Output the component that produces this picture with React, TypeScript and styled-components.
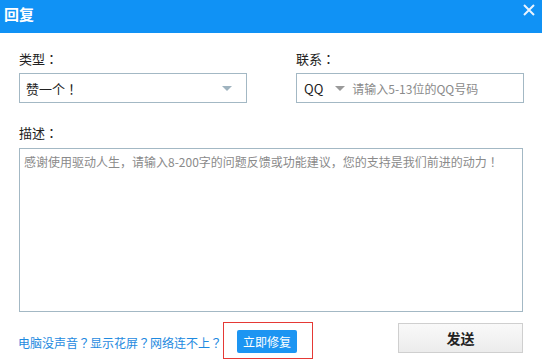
import React from "react";
import styled, { createGlobalStyle } from "styled-components";

const Global = createGlobalStyle`
  html, body { margin: 0; padding: 0; background: #fff; }
  body {
    font-family: "Noto Sans CJK SC", "Noto Sans", sans-serif;
  }
  * { box-sizing: border-box; }
`;

const Dialog = styled.div`
  width: 542px;
  height: 364px;
  background: #fff;
  display: flex;
  flex-direction: column;
  overflow: hidden;
`;

const TitleBar = styled.div`
  height: 33px;
  background: #1092f5;
  display: flex;
  align-items: flex-start;
  justify-content: space-between;
  padding: 0 7px 0 4px;
`;

const Title = styled.div`
  color: #fff;
  font-size: 15px;
  font-weight: bold;
  line-height: 28px;
`;

const Close = styled.div`
  width: 12px;
  height: 12px;
  margin-top: 4px;
  display: flex;
`;

const Body = styled.div`
  padding: 0 19px;
  display: flex;
  flex-direction: column;
`;

const FieldRow = styled.div`
  display: grid;
  grid-template-columns: 228px 228px;
  column-gap: 49px;
  margin-top: 17px;
`;

const Field = styled.div`
  display: flex;
  flex-direction: column;
`;

const Label = styled.div`
  font-size: 13px;
  line-height: 18px;
  color: #222;
  height: 23px;
  white-space: nowrap;
`;

const P = styled.span`
  font-family: "Noto Sans CJK TC", "Noto Sans CJK SC", sans-serif;
`;

const Box = styled.div`
  height: 30px;
  border: 1px solid #a3b8c4;
  display: flex;
  align-items: center;
  padding-left: 6px;
  padding-right: 7px;
  font-size: 13px;
  color: #222;
`;

const Value = styled.span<{ $grow?: boolean; $gap?: number }>`
  flex: ${(p) => (p.$grow ? 1 : "none")};
  margin-right: ${(p) => p.$gap ?? 0}px;
  white-space: nowrap;
`;

const Arrow = styled.span<{ $color: string }>`
  width: 0;
  height: 0;
  border-left: 5px solid transparent;
  border-right: 5px solid transparent;
  border-top: 5px solid ${(p) => p.$color};
  margin: 0 7px 0 0;
`;

const Placeholder = styled.span`
  font-size: 12px;
  color: #8a8a8a;
  white-space: nowrap;
`;

const DescLabel = styled(Label)`
  margin-top: 21px;
  height: 24px;
`;

const TextArea = styled.div`
  height: 164px;
  border: 1px solid #a3b8c4;
  padding: 4px 4px;
  font-size: 12px;
  line-height: 18px;
  color: #8a8a8a;
  white-space: nowrap;
`;

const Footer = styled.div`
  display: flex;
  align-items: flex-start;
  margin-top: 10px;
  padding-left: 18px;
  padding-right: 19px;
`;

const Links = styled.div`
  font-size: 12px;
  color: #1e8ae0;
  margin-top: 12px;
  line-height: 18px;
  white-space: nowrap;
  width: 205px;
`;

const Highlight = styled.div`
  width: 90px;
  height: 37px;
  border: 1px solid #e53935;
  padding: 7px 0 0 13px;
`;

const FixButton = styled.div`
  width: 60px;
  height: 23px;
  background: #1c95f2;
  border-radius: 2px;
  color: #fff;
  font-size: 12px;
  line-height: 23px;
  text-align: center;
`;

const SendButton = styled.div`
  margin-left: auto;
  margin-top: 1px;
  width: 125px;
  height: 30px;
  border: 1px solid #cfcfcf;
  background: linear-gradient(#f9f9f9, #ececec);
  color: #222;
  font-size: 14px;
  font-weight: bold;
  line-height: 28px;
  text-align: center;
`;

export default function App() {
  return (
    <>
      <Global />
      <Dialog>
        <TitleBar>
          <Title>回复</Title>
          <Close>
            <svg width="12" height="12" viewBox="0 0 12 12">
              <path d="M1 1 L11 11 M11 1 L1 11" stroke="#e8f4ff" strokeWidth="2" />
            </svg>
          </Close>
        </TitleBar>
        <Body>
          <FieldRow>
            <Field>
              <Label>类型<P>：</P></Label>
              <Box>
                <Value $grow>赞一个<P>！</P></Value>
                <Arrow $color="#9fb3bf" />
              </Box>
            </Field>
            <Field>
              <Label>联系<P>：</P></Label>
              <Box>
                <Value $gap={12} style={{ marginLeft: 1 }}>QQ</Value>
                <Arrow $color="#9a9a9a" />
                <Placeholder>请输入5-13位的QQ号码</Placeholder>
              </Box>
            </Field>
          </FieldRow>
          <DescLabel>描述<P>：</P></DescLabel>
          <TextArea>
            感谢使用驱动人生，请输入8-200字的问题反馈或功能建议，您的支持是我们前进的动力<P>！</P>
          </TextArea>
        </Body>
        <Footer>
          <Links>
            电脑没声音<P>？</P>显示花屏<P>？</P>网络连不上<P>？</P>
          </Links>
          <Highlight>
            <FixButton>立即修复</FixButton>
          </Highlight>
          <SendButton>发送</SendButton>
        </Footer>
      </Dialog>
    </>
  );
}
